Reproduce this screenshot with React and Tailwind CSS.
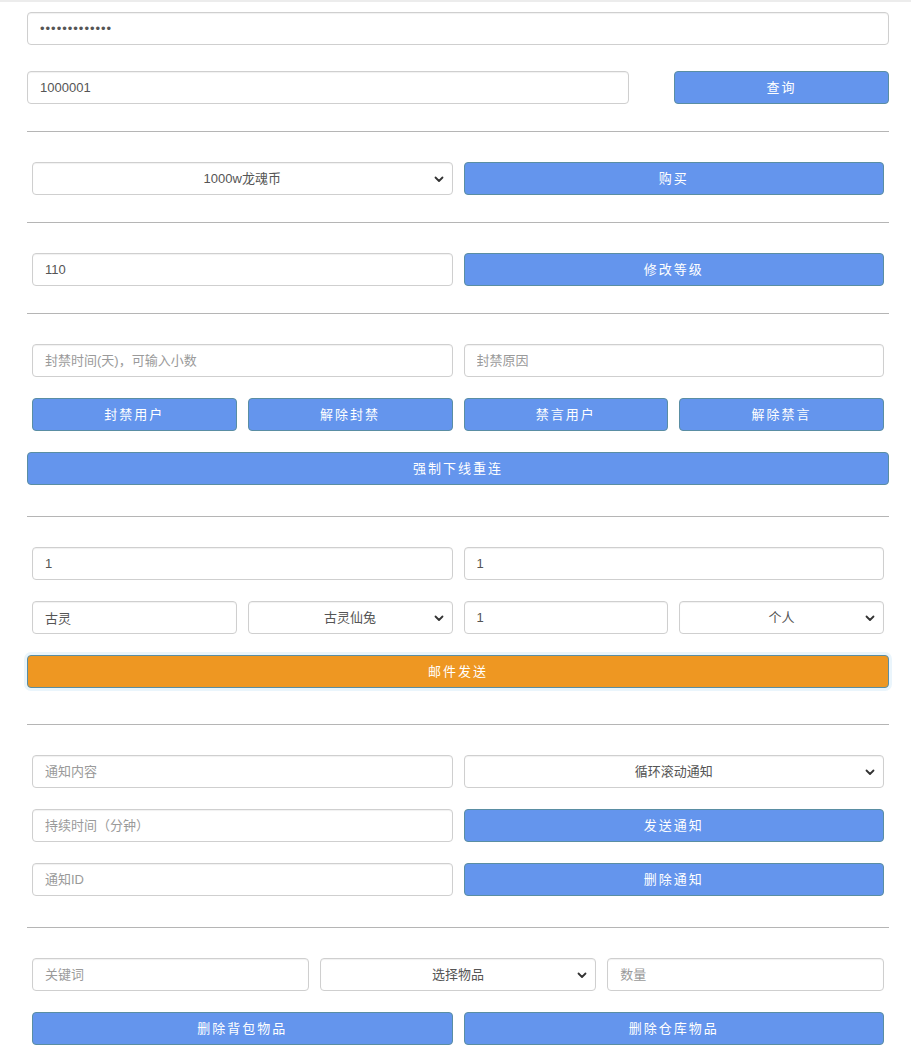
import { useState } from 'react';

const font = { fontFamily: '"Liberation Sans", "Noto Sans CJK SC", sans-serif' };

const fieldBase =
  'h-[33px] rounded-[4px] border border-[#cfcfcf] bg-white px-3 text-[13px] text-[#555] placeholder:text-[#9a9a9a] shadow-[inset_0_1px_1px_rgba(0,0,0,0.06)] outline-none';
const inputCls = `${fieldBase} w-full`;

const btnBase =
  'h-[33px] rounded-[4px] border border-[#5a8ea3] bg-[#6495ed] text-[13px] tracking-[2px] text-white';
const btnCls = `${btnBase} w-full`;

const Chevron = () => (
  <svg className="pointer-events-none absolute right-[9px] top-1/2 h-[10px] w-[10px] -translate-y-1/2" viewBox="0 0 10 10" fill="none">
    <path d="M1.5 3.5 5 7l3.5-3.5" stroke="#333" strokeWidth="1.8" strokeLinecap="round" strokeLinejoin="round" />
  </svg>
);

const Select = ({ value, options }) => (
  <div className="relative">
    <select
      defaultValue={value}
      className="h-[33px] w-full appearance-none rounded-[4px] border border-[#cfcfcf] bg-white px-3 text-center text-[13px] text-[#555] shadow-[inset_0_1px_1px_rgba(0,0,0,0.06)] outline-none [text-align-last:center]"
    >
      {options.map((o) => (
        <option key={o}>{o}</option>
      ))}
    </select>
    <Chevron />
  </div>
);

const Rule = ({ className }) => <div className={`border-t border-[#b5b5b5] ${className}`} />;

export default function App() {
  const [uid, setUid] = useState('1000001');
  const [level, setLevel] = useState('110');

  return (
    <div className="min-h-screen bg-white" style={font}>
      <div className="h-[2px] bg-[#ececec]" />
      <div className="ml-[27px] w-[862px] pb-6">
        {/* login */}
        <input type="password" defaultValue="1234567890123" className={`${inputCls} mt-[10px] tracking-[1px]`} />
        <div className="mt-[26px] flex gap-[45px]">
          <input value={uid} onChange={(e) => setUid(e.target.value)} className={`${fieldBase} w-[602px] flex-none`} />
          <button className={`${btnBase} w-[215px] flex-none`}>查询</button>
        </div>

        <Rule className="mt-[27px]" />

        {/* buy */}
        <div className="mx-[5px] mt-[30px] grid grid-cols-2 gap-x-[11px]">
          <Select value="1000w龙魂币" options={['1000w龙魂币', '500w龙魂币', '100w龙魂币']} />
          <button className={btnCls}>购买</button>
        </div>

        <Rule className="mt-[27px]" />

        {/* level */}
        <div className="mx-[5px] mt-[30px] grid grid-cols-2 gap-x-[11px]">
          <input value={level} onChange={(e) => setLevel(e.target.value)} className={inputCls} />
          <button className={btnCls}>修改等级</button>
        </div>

        <Rule className="mt-[27px]" />

        {/* ban */}
        <div className="mx-[5px] mt-[30px] grid grid-cols-2 gap-x-[11px]">
          <input placeholder="封禁时间(天)，可输入小数" className={inputCls} />
          <input placeholder="封禁原因" className={inputCls} />
        </div>
        <div className="mx-[5px] mt-[21px] grid grid-cols-4 gap-x-[11px]">
          <button className={btnCls}>封禁用户</button>
          <button className={btnCls}>解除封禁</button>
          <button className={btnCls}>禁言用户</button>
          <button className={btnCls}>解除禁言</button>
        </div>
        <button className={`${btnCls} mt-[21px]`}>强制下线重连</button>

        <Rule className="mt-[31px]" />

        {/* mail */}
        <div className="mx-[5px] mt-[30px] grid grid-cols-2 gap-x-[11px]">
          <input defaultValue="1" className={inputCls} />
          <input defaultValue="1" className={inputCls} />
        </div>
        <div className="mx-[5px] mt-[21px] grid grid-cols-4 gap-x-[11px]">
          <input defaultValue="古灵" className={inputCls} />
          <Select value="古灵仙兔" options={['古灵仙兔', '古灵仙狐']} />
          <input defaultValue="1" className={inputCls} />
          <Select value="个人" options={['个人', '全服']} />
        </div>
        <button className="mt-[21px] h-[33px] w-full rounded-[4px] border border-[#5a8ea3] bg-[#ee9722] text-[13px] tracking-[2px] text-white shadow-[0_0_0_3px_#eaf5fc]">
          邮件发送
        </button>

        <Rule className="mt-[36px]" />

        {/* notice */}
        <div className="mx-[5px] mt-[30px] grid grid-cols-2 gap-x-[11px] gap-y-[21px]">
          <input placeholder="通知内容" className={inputCls} />
          <Select value="循环滚动通知" options={['循环滚动通知', '单次通知']} />
          <input placeholder="持续时间（分钟）" className={inputCls} />
          <button className={btnCls}>发送通知</button>
          <input placeholder="通知ID" className={inputCls} />
          <button className={btnCls}>删除通知</button>
        </div>

        <Rule className="mt-[31px]" />

        {/* items */}
        <div className="mx-[5px] mt-[30px] grid grid-cols-3 gap-x-[11px]">
          <input placeholder="关键词" className={inputCls} />
          <Select value="选择物品" options={['选择物品']} />
          <input placeholder="数量" className={inputCls} />
        </div>
        <div className="mx-[5px] mt-[21px] grid grid-cols-2 gap-x-[11px]">
          <button className={btnCls}>删除背包物品</button>
          <button className={btnCls}>删除仓库物品</button>
        </div>
      </div>
    </div>
  );
}
